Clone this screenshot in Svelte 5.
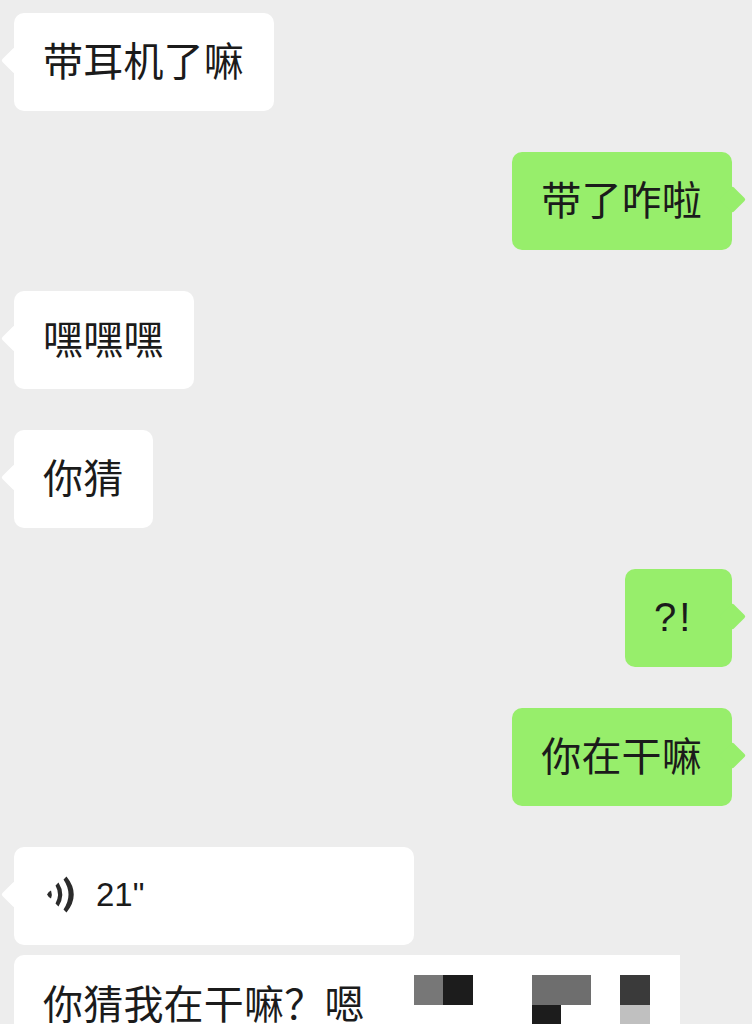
<script>
    const messages = [
        { side: 'left', text: '带耳机了嘛' },
        { side: 'right', text: '带了咋啦' },
        { side: 'left', text: '嘿嘿嘿' },
        { side: 'left', text: '你猜' },
        { side: 'right', text: '?!', latin: true },
        { side: 'right', text: '你在干嘛' }
    ];

    // censored part of the last message, one entry per mosaic tile
    const tiles = [
        '#777777', '#1c1c1c', null, null, '#6e6e6e', '#6e6e6e', null, '#3a3a3a',
        null, null, null, null, '#1c1c1c', null, null, '#c0c0c0'
    ];
</script>

<div class="chat">
    {#each messages as msg}
        <div class="row {msg.side}">
            <div class="bubble {msg.side}">
                <span class="text" class:latin={msg.latin}>{msg.text}</span>
            </div>
        </div>
    {/each}

    <div class="row left">
        <div class="bubble left voice">
            <svg class="wave" width="30" height="38" viewBox="0 0 30 38">
                <path d="M1 18.5 Q2.5 15.5 5 14.5 Q6.5 18.5 5 22.5 Q2.5 21.5 1 18.5 Z" fill="#2b2b2b" />
                <path d="M9.5 9.5 L12.5 6.5 Q20 18.5 12.5 30.5 L9.5 27.5 Q14.5 18.5 9.5 9.5 Z" fill="#2b2b2b" />
                <path d="M17.5 3.5 L20.5 0.5 Q35 18.5 20.5 36.5 L17.5 33.5 Q27.5 18.5 17.5 3.5 Z" fill="#2b2b2b" />
            </svg>
            <span class="seconds">21"</span>
        </div>
    </div>

    <div class="long">
        <span class="text">你猜我在干嘛？嗯</span>
        <div class="mosaic">
            {#each tiles as color}
                <i style:background={color}></i>
            {/each}
        </div>
    </div>
</div>

<style>
    :global(body) {
        background: #ededed;
    }
    .chat {
        height: 1024px;
        box-sizing: border-box;
        padding: 13px 20px 0 14px;
        overflow: hidden;
        background: #ededed;
        color: #1b1b1b;
        font-family: "Noto Sans CJK SC", "Liberation Sans", sans-serif;
    }
    .row {
        display: flex;
        margin-bottom: 41.5px;
    }
    .row.right {
        justify-content: flex-end;
    }
    .bubble {
        position: relative;
        display: flex;
        align-items: center;
        height: 97.5px;
        box-sizing: border-box;
        padding: 0 30px 5px 29px;
        border-radius: 10px;
        background: #fff;
    }
    .bubble.right {
        background: #97ee6b;
    }
    .bubble::before {
        content: '';
        position: absolute;
        top: 47px;
        width: 19px;
        height: 19px;
        margin-top: -9.5px;
        border-radius: 2px;
        background: inherit;
        transform: rotate(45deg);
    }
    .bubble.left::before {
        left: -9.5px;
    }
    .bubble.right::before {
        right: -9.5px;
    }
    .text {
        font-size: 40px;
        letter-spacing: 0.2px;
        line-height: 56px;
        white-space: nowrap;
    }
    .text.latin {
        width: 48px;
        margin-top: 4px;
        font-family: "Liberation Sans", sans-serif;
        letter-spacing: 3px;
    }
    .voice {
        width: 400px;
        padding-left: 32px;
    }
    .wave {
        flex: none;
        margin-top: 4px;
    }
    .seconds {
        margin: 4px 0 0 20px;
        font-family: "Liberation Sans", sans-serif;
        font-size: 33px;
    }
    .row:has(.voice) {
        margin-bottom: 10.5px;
    }
    .long {
        display: flex;
        width: 666px;
        height: 120px;
        box-sizing: border-box;
        padding: 19px 29px 0;
        border-radius: 10px 0 0 0;
        background: #fff;
    }
    .mosaic {
        display: grid;
        grid-template-columns: repeat(8, 29.5px);
        grid-auto-rows: 29.5px;
        margin-top: 1px;
        margin-left: 49px;
    }
</style>
